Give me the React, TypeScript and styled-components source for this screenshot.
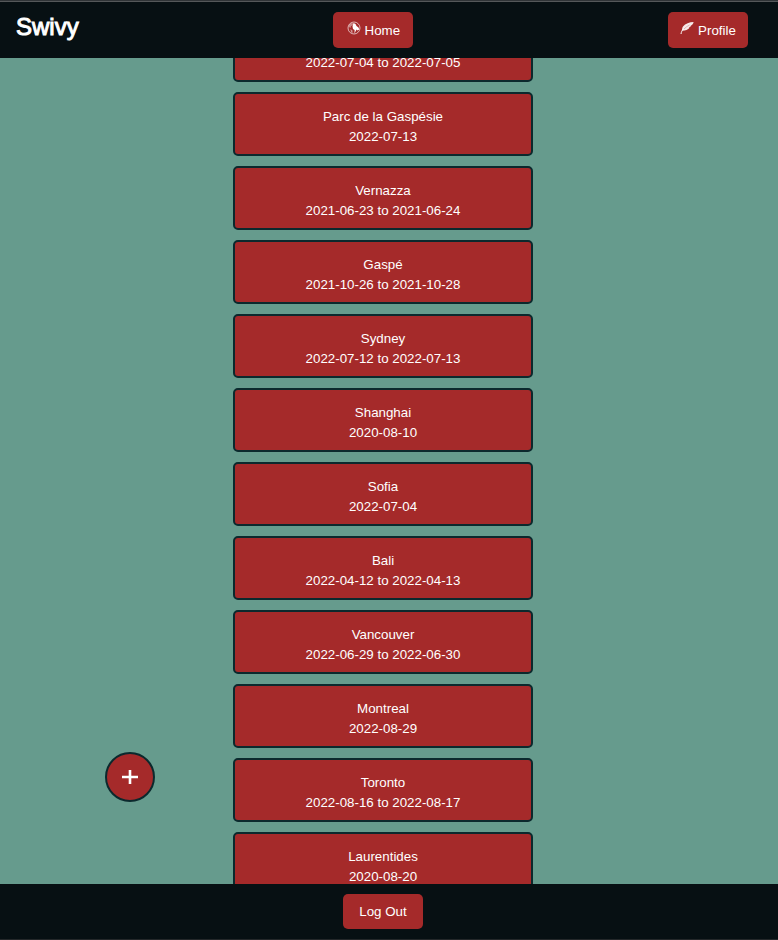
import { useLayoutEffect, useRef } from "react";
import styled, { createGlobalStyle } from "styled-components";

const GlobalStyle = createGlobalStyle`
  *, *::before, *::after { box-sizing: border-box; }
  body { margin: 0; font-family: "Liberation Sans", Arial, sans-serif; }
`;

const Page = styled.div`
  display: flex;
  flex-direction: column;
  height: 100vh;
  background: #669b8d;
`;

const Header = styled.header`
  flex: none;
  display: flex;
  align-items: center;
  justify-content: space-between;
  height: 58px;
  padding: 1px 30px 0 16px;
  background: #071013;
  border-top: 1px solid #303437;
  box-shadow: inset 0 1px #55585a;
`;

const Brand = styled.h1`
  margin: 0 0 6px;
  color: #fff;
  font-size: 24px;
  line-height: 28px;
  font-weight: 400;
  -webkit-text-stroke: 1px #fff;
`;

const Button = styled.button<{ $height?: number }>`
  display: flex;
  align-items: center;
  justify-content: center;
  gap: 4px;
  width: 80px;
  height: ${({ $height = 36 }) => $height}px;
  padding: 0;
  border: 0;
  border-radius: 5px;
  background: #a52a2a;
  color: #fff;
  font-family: inherit;
  cursor: pointer;
`;

const Icon = styled.svg`
  flex: none;
  width: 14px;
  height: 14px;
  margin-bottom: 4px;
`;

const Content = styled.main`
  flex: 1;
  min-height: 0;
  overflow-y: auto;
  scrollbar-width: none;
  padding-right: 12px;
`;

const TripList = styled.ul`
  display: flex;
  flex-direction: column;
  align-items: center;
  gap: 10px;
  margin: 0;
  padding: 0;
  list-style: none;
`;

const TripCard = styled.button`
  display: flex;
  flex-direction: column;
  align-items: center;
  justify-content: flex-end;
  width: 300px;
  height: 64px;
  padding: 12px 8px 7px;
  border: 2px solid #0b292d;
  border-radius: 5px;
  background: #a52a2a;
  color: #fff;
  font-family: inherit;
  line-height: 20px;
  cursor: pointer;
`;

const AddButton = styled.button`
  position: fixed;
  left: 105px;
  bottom: 138px;
  display: grid;
  place-items: center;
  width: 50px;
  height: 50px;
  padding: 0;
  border: 2px solid #0b292d;
  border-radius: 50%;
  background: #a52a2a;
  color: #fff;
  cursor: pointer;
`;

const Footer = styled.footer`
  flex: none;
  display: flex;
  justify-content: center;
  height: 56px;
  padding: 10px 12px 0 0;
  background: #071013;
  border-bottom: 1px solid #24282a;
`;

interface Trip {
  name?: string;
  dates: string;
}

const trips: Trip[] = [
  { dates: "2022-07-04 to 2022-07-05" },
  { name: "Parc de la Gaspésie", dates: "2022-07-13" },
  { name: "Vernazza", dates: "2021-06-23 to 2021-06-24" },
  { name: "Gaspé", dates: "2021-10-26 to 2021-10-28" },
  { name: "Sydney", dates: "2022-07-12 to 2022-07-13" },
  { name: "Shanghai", dates: "2020-08-10" },
  { name: "Sofia", dates: "2022-07-04" },
  { name: "Bali", dates: "2022-04-12 to 2022-04-13" },
  { name: "Vancouver", dates: "2022-06-29 to 2022-06-30" },
  { name: "Montreal", dates: "2022-08-29" },
  { name: "Toronto", dates: "2022-08-16 to 2022-08-17" },
  { name: "Laurentides", dates: "2020-08-20" },
];

const GlobeIcon = () => (
  <Icon viewBox="0 0 14 14" aria-hidden="true">
    <circle cx="7" cy="7" r="6" fill="none" stroke="#fff" strokeOpacity="0.8" strokeWidth="0.8" />
    <path d="M2 4L4.5 2L6.5 2.5L5.5 4.5L4 5L3.5 7L2 6Z" fill="#fff" fillOpacity="0.45" />
    <path d="M6.5 2L8.5 3L9.5 5L11.5 6.5L12.3 8.5L10.5 9.5L9.5 8.5L7.5 12.5L7.6 9L6 8L5.5 5.5Z" fill="#fff" />
    <path d="M3.5 8L5.5 9.5L5.5 12L4 11.5Z" fill="#fff" fillOpacity="0.5" />
  </Icon>
);

const FeatherIcon = () => (
  <Icon viewBox="0 0 14 14" aria-hidden="true">
    <path d="M13.6 1C9.5 1 5.3 2.6 3 5.4C2.1 6.7 2 8.2 2.3 9.8C5.5 9.6 8 8.6 9.6 6.7L8.8 6.6L11 5.3L10.6 4.9L12.4 3.5C13.1 2.7 13.5 1.8 13.6 1Z" fill="#fff" fillOpacity="0.9" />
    <path d="M1 13C1.3 11 2 9.4 3.4 7.8" fill="none" stroke="#fff" strokeWidth="1" />
    <path d="M4 8C5.5 6.4 7.5 5 9.5 4" fill="none" stroke="#a52a2a" strokeWidth="0.3" />
  </Icon>
);

export default function App() {
  const content = useRef<HTMLElement>(null);

  useLayoutEffect(() => {
    if (content.current) content.current.scrollTop = 40;
  }, []);

  return (
    <Page>
      <GlobalStyle />
      <Header>
        <Brand>Swivy</Brand>
        <Button type="button"><GlobeIcon />Home</Button>
        <Button type="button"><FeatherIcon />Profile</Button>
      </Header>
      <Content ref={content}>
        <TripList>
          {trips.map((trip, index) => (
            <li key={index}>
              <TripCard type="button">
                {trip.name && <span>{trip.name}</span>}
                <span>{trip.dates}</span>
              </TripCard>
            </li>
          ))}
        </TripList>
      </Content>
      <AddButton type="button" aria-label="Add trip">
        <svg width="16" height="16" viewBox="0 0 16 16" aria-hidden="true">
          <path d="M8 1V15M0 8H16" stroke="currentColor" strokeWidth="2.6" />
        </svg>
      </AddButton>
      <Footer>
        <Button type="button" $height={35}>Log Out</Button>
      </Footer>
    </Page>
  );
}
